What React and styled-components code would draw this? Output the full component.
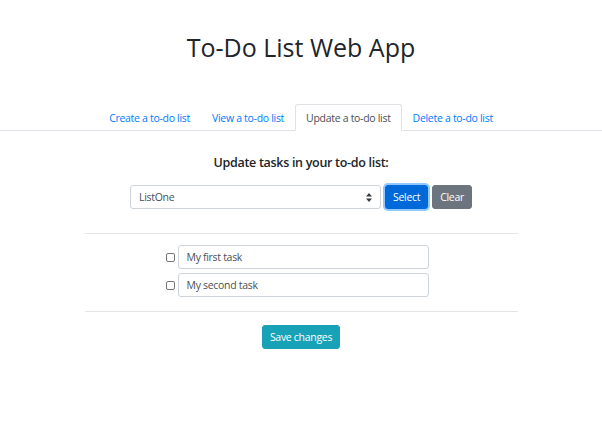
import React from "react"
import styled, { createGlobalStyle } from "styled-components"

const GlobalStyle = createGlobalStyle`
  body {
    margin: 0;
    background: #fff;
    font-family: "Open Sans", "Noto Sans", sans-serif;
    color: #212529;
  }
`

const Page = styled.div`
  display: flex;
  flex-direction: column;
`

const Title = styled.h1`
  margin: 30px 0 0;
  height: 74px;
  text-align: center;
  font-size: 25px;
  font-weight: 500;
  line-height: 34px;
`

const Tabs = styled.ul`
  display: flex;
  justify-content: center;
  list-style: none;
  margin: 0;
  padding: 0;
  border-bottom: 1px solid #dee2e6;
`

const Tab = styled.li`
  margin-bottom: -1px;
  a {
    display: block;
    padding: 0 10px;
    height: 25px;
    line-height: 26px;
    font-size: 10.5px;
    letter-spacing: -0.3px;
    color: ${(p) => (p.active ? "#495057" : "#007bff")};
    background: ${(p) => (p.active ? "#fff" : "transparent")};
    border: 1px solid ${(p) => (p.active ? "#dee2e6" : "transparent")};
    border-bottom-color: ${(p) => (p.active ? "#fff" : "transparent")};
    border-radius: 3px 3px 0 0;
    text-decoration: none;
  }
`

const Content = styled.div`
  width: 433px;
  margin: 0 auto;
  display: flex;
  flex-direction: column;
  align-items: center;
`

const Heading = styled.h4`
  margin: 22px 0 0;
  font-size: 12.5px;
  font-weight: 600;
  letter-spacing: -0.3px;
  line-height: 20px;
`

const Row = styled.div`
  display: flex;
  align-items: center;
  gap: 4px;
  margin-top: 12px;
`

const Select = styled.div`
  width: 251px;
  height: 24px;
  border: 1px solid #ced4da;
  border-radius: 3px;
  display: flex;
  align-items: center;
  justify-content: space-between;
  padding: 0 8px;
  box-sizing: border-box;
  font-size: 10.5px;
  letter-spacing: -0.3px;
  color: #495057;
`

const Button = styled.button`
  height: 24px;
  padding: 0 7px;
  border: 1px solid ${(p) => p.color};
  border-radius: 3px;
  background: ${(p) => p.color};
  color: #fff;
  font-family: inherit;
  font-size: 10.5px;
  letter-spacing: -0.3px;
  line-height: 22px;
  box-shadow: ${(p) => (p.focus ? "0 0 0 2px rgba(38,143,255,.5)" : "none")};
`

const Rule = styled.hr`
  width: 100%;
  margin: ${(p) => p.top}px 0 0;
  border: 0;
  border-top: 1px solid #e5e5e5;
`

const Tasks = styled.div`
  display: flex;
  flex-direction: column;
  gap: 4px;
  margin-top: 11px;
  padding-right: 8px;
`

const TaskRow = styled.div`
  display: flex;
  align-items: center;
  gap: 3px;
`

const Box = styled.span`
  width: 9px;
  height: 9px;
  border: 1px solid #767676;
  border-radius: 2px;
  box-sizing: border-box;
`

const TaskInput = styled.div`
  width: 251px;
  height: 24px;
  box-sizing: border-box;
  border: 1px solid #ced4da;
  border-radius: 3px;
  padding: 0 8px;
  display: flex;
  align-items: center;
  font-size: 10.5px;
  letter-spacing: -0.3px;
  color: #495057;
`

const SaveRow = styled.div`
  margin-top: 12px;
`

const Arrows = () => (
  <svg width="6" height="9" viewBox="0 0 6 9">
    <path d="M3 0 L6 3.5 H0 Z M3 9 L6 5.5 H0 Z" fill="#343a40" />
  </svg>
)

const App = () => (
  <Page>
    <GlobalStyle />
    <Title>To-Do List Web App</Title>
    <Tabs>
      <Tab><a>Create a to-do list</a></Tab>
      <Tab><a>View a to-do list</a></Tab>
      <Tab active><a>Update a to-do list</a></Tab>
      <Tab><a>Delete a to-do list</a></Tab>
    </Tabs>
    <Content>
      <Heading>Update tasks in your to-do list:</Heading>
      <Row>
        <Select>
          <span>ListOne</span>
          <Arrows />
        </Select>
        <Button color="#0069d9" focus>Select</Button>
        <Button color="#6c757d">Clear</Button>
      </Row>
      <Rule top={24} />
      <Tasks>
        <TaskRow>
          <Box />
          <TaskInput>My first task</TaskInput>
        </TaskRow>
        <TaskRow>
          <Box />
          <TaskInput>My second task</TaskInput>
        </TaskRow>
      </Tasks>
      <Rule top={14} />
      <SaveRow>
        <Button color="#17a2b8">Save changes</Button>
      </SaveRow>
    </Content>
  </Page>
)

export default App
